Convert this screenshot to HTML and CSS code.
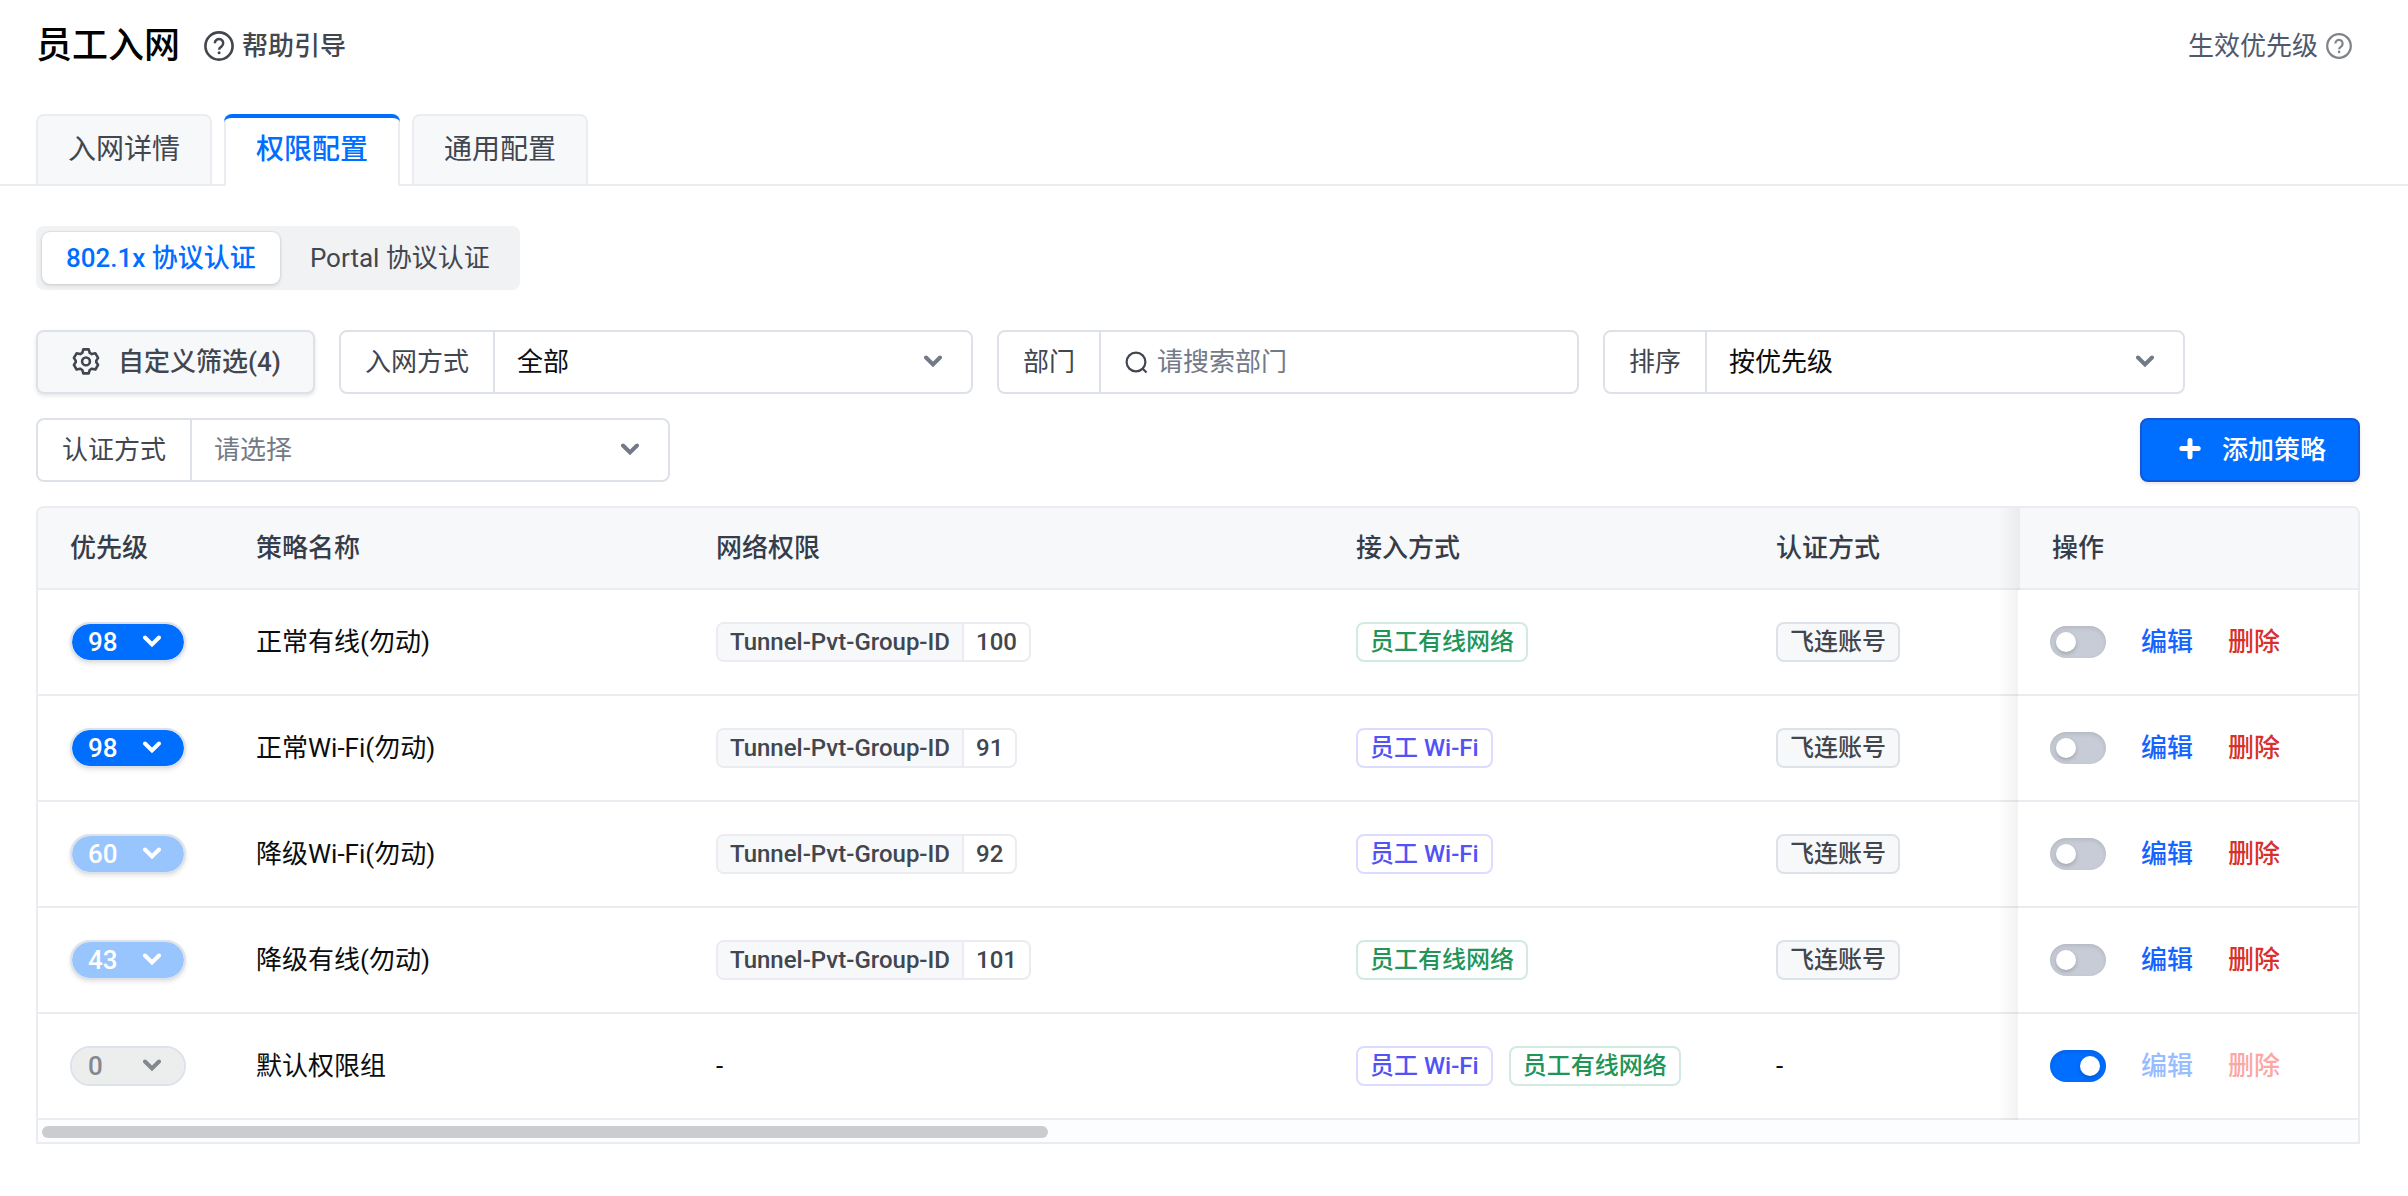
FILE: index.html
```html
<!DOCTYPE html>
<html lang="zh-CN">
<head>
    <meta charset="UTF-8">
    <meta name="viewport" content="width=device-width, initial-scale=1.0">
    <title>员工入网</title>
    <link rel="stylesheet" href="styles.css">
</head>
<body>
    <!-- shared icons -->
    <svg class="sprite" aria-hidden="true">
        <symbol id="icon-help" viewBox="0 0 30 30">
            <circle cx="15" cy="15" r="13.6" fill="none" stroke="currentColor" stroke-width="2.6"/>
            <path d="M10.8 12.2a4.2 4.2 0 1 1 6.6 3.4c-1.5 1-2.3 1.6-2.3 3.1" fill="none" stroke="currentColor" stroke-width="2.5"/>
            <circle cx="15.1" cy="21.8" r="1.5" fill="currentColor"/>
        </symbol>
        <symbol id="icon-down" viewBox="0 0 18 14">
            <path d="M2 2.5l7 7 7-7" fill="none" stroke="currentColor" stroke-width="4" stroke-linecap="round"/>
        </symbol>
    </svg>

    <header class="page-header">
        <h1>员工入网</h1>
        <a class="help" href="#">
            <svg><use href="#icon-help"/></svg>
            帮助引导
        </a>
        <a class="priority-tip" href="#">
            生效优先级
            <svg><use href="#icon-help"/></svg>
        </a>
    </header>

    <nav class="tabs">
        <button type="button" class="tab">入网详情</button>
        <button type="button" class="tab active">权限配置</button>
        <button type="button" class="tab">通用配置</button>
    </nav>

    <main>
        <div class="segment">
            <button type="button" class="active">802.1x 协议认证</button>
            <button type="button">Portal 协议认证</button>
        </div>

        <div class="filters">
            <button type="button" class="btn">
                <svg viewBox="0 0 32 32" fill="none" stroke="currentColor" stroke-width="2.6" stroke-linejoin="round">
                    <path d="M13.3 3.4h5.4l1 3.4 2.2 1.3 3.5-.8 2.7 4.6-1.8 2.7v1.6l1.8 2.7-2.7 4.6-3.5-.8-2.2 1.3-1 3.4h-5.4l-1-3.4-2.2-1.3-3.5.8-2.7-4.6 1.8-2.7v-1.6l-1.8-2.7 2.7-4.6 3.5.8 2.2-1.3z"/>
                    <circle cx="16" cy="15.4" r="3.9"/>
                </svg>
                自定义筛选(4)
            </button>

            <div class="field">
                <label for="access">入网方式</label>
                <div class="select-box">
                    <select id="access"><option>全部</option></select>
                    <svg><use href="#icon-down"/></svg>
                </div>
            </div>

            <div class="field">
                <label for="dept">部门</label>
                <div class="search-box">
                    <svg viewBox="0 0 24 24" fill="none" stroke="currentColor" stroke-width="2.2">
                        <circle cx="11" cy="12" r="9.4"/>
                        <path d="M17.5 18.5l4 4"/>
                    </svg>
                    <input type="text" id="dept" placeholder="请搜索部门">
                </div>
            </div>

            <div class="field">
                <label for="sort">排序</label>
                <div class="select-box">
                    <select id="sort"><option>按优先级</option></select>
                    <svg><use href="#icon-down"/></svg>
                </div>
            </div>

            <div class="field">
                <label for="auth">认证方式</label>
                <div class="select-box">
                    <select id="auth" class="empty"><option>请选择</option></select>
                    <svg><use href="#icon-down"/></svg>
                </div>
            </div>

            <button type="button" class="btn primary">
                <svg viewBox="0 0 32 32" fill="none" stroke="currentColor" stroke-width="5" stroke-linecap="round">
                    <path d="M16 6.4v16.4M7.8 14.6h16.4"/>
                </svg>
                添加策略
            </button>
        </div>

        <div class="table-wrap">
            <table>
                <colgroup>
                    <col class="col-priority">
                    <col class="col-name">
                    <col class="col-network">
                    <col class="col-access">
                    <col>
                    <col class="col-action">
                </colgroup>
                <thead>
                    <tr>
                        <th>优先级</th>
                        <th>策略名称</th>
                        <th>网络权限</th>
                        <th>接入方式</th>
                        <th>认证方式</th>
                        <th class="fixed">操作</th>
                    </tr>
                </thead>
                <tbody>
                    <tr>
                        <td>
                            <div class="pill">
                                <select aria-label="优先级"><option>98</option></select>
                                <svg><use href="#icon-down"/></svg>
                            </div>
                        </td>
                        <td>正常有线(勿动)</td>
                        <td><div class="pair"><span>Tunnel-Pvt-Group-ID</span><span>100</span></div></td>
                        <td><div class="tags"><span class="tag green">员工有线网络</span></div></td>
                        <td><div class="tags"><span class="tag">飞连账号</span></div></td>
                        <td class="fixed">
                            <div class="actions">
                                <input type="checkbox" class="switch" aria-label="启用">
                                <button type="button" class="link">编辑</button>
                                <button type="button" class="link danger">删除</button>
                            </div>
                        </td>
                    </tr>
                    <tr>
                        <td>
                            <div class="pill">
                                <select aria-label="优先级"><option>98</option></select>
                                <svg><use href="#icon-down"/></svg>
                            </div>
                        </td>
                        <td>正常Wi-Fi(勿动)</td>
                        <td><div class="pair"><span>Tunnel-Pvt-Group-ID</span><span>91</span></div></td>
                        <td><div class="tags"><span class="tag purple">员工 Wi-Fi</span></div></td>
                        <td><div class="tags"><span class="tag">飞连账号</span></div></td>
                        <td class="fixed">
                            <div class="actions">
                                <input type="checkbox" class="switch" aria-label="启用">
                                <button type="button" class="link">编辑</button>
                                <button type="button" class="link danger">删除</button>
                            </div>
                        </td>
                    </tr>
                    <tr>
                        <td>
                            <div class="pill light">
                                <select aria-label="优先级"><option>60</option></select>
                                <svg><use href="#icon-down"/></svg>
                            </div>
                        </td>
                        <td>降级Wi-Fi(勿动)</td>
                        <td><div class="pair"><span>Tunnel-Pvt-Group-ID</span><span>92</span></div></td>
                        <td><div class="tags"><span class="tag purple">员工 Wi-Fi</span></div></td>
                        <td><div class="tags"><span class="tag">飞连账号</span></div></td>
                        <td class="fixed">
                            <div class="actions">
                                <input type="checkbox" class="switch" aria-label="启用">
                                <button type="button" class="link">编辑</button>
                                <button type="button" class="link danger">删除</button>
                            </div>
                        </td>
                    </tr>
                    <tr>
                        <td>
                            <div class="pill light">
                                <select aria-label="优先级"><option>43</option></select>
                                <svg><use href="#icon-down"/></svg>
                            </div>
                        </td>
                        <td>降级有线(勿动)</td>
                        <td><div class="pair"><span>Tunnel-Pvt-Group-ID</span><span>101</span></div></td>
                        <td><div class="tags"><span class="tag green">员工有线网络</span></div></td>
                        <td><div class="tags"><span class="tag">飞连账号</span></div></td>
                        <td class="fixed">
                            <div class="actions">
                                <input type="checkbox" class="switch" aria-label="启用">
                                <button type="button" class="link">编辑</button>
                                <button type="button" class="link danger">删除</button>
                            </div>
                        </td>
                    </tr>
                    <tr>
                        <td>
                            <div class="pill disabled">
                                <select aria-label="优先级" disabled><option>0</option></select>
                                <svg><use href="#icon-down"/></svg>
                            </div>
                        </td>
                        <td>默认权限组</td>
                        <td>-</td>
                        <td>
                            <div class="tags">
                                <span class="tag purple">员工 Wi-Fi</span>
                                <span class="tag green">员工有线网络</span>
                            </div>
                        </td>
                        <td>-</td>
                        <td class="fixed">
                            <div class="actions">
                                <input type="checkbox" class="switch" aria-label="启用" checked>
                                <button type="button" class="link" disabled>编辑</button>
                                <button type="button" class="link danger" disabled>删除</button>
                            </div>
                        </td>
                    </tr>
                </tbody>
            </table>
            <div class="scrollbar"><div class="thumb"></div></div>
        </div>
    </main>
</body>
</html>
```

FILE: styles.css
```css
* {
    box-sizing: border-box;
}
body {
    margin: 0;
    background: #fff;
    color: #0c0d0e;
    font-family: Roboto, "Noto Sans CJK SC", sans-serif;
    font-size: 26px;
    line-height: 40px;
}
button, input, select {
    margin: 0;
    padding: 0;
    border: none;
    background: none;
    color: inherit;
    font: inherit;
    outline: none;
}
button {
    cursor: pointer;
    white-space: nowrap;
}
select {
    appearance: none;
    width: 100%;
    height: 100%;
    opacity: 1;
}
a {
    color: inherit;
    text-decoration: none;
}
svg {
    flex: none;
}
.sprite {
    display: none;
}

/* header */
.page-header {
    display: flex;
    align-items: center;
    height: 114px;
    padding: 0 56px 22px 36px;
}
.page-header h1 {
    margin: 0 24px 0 0;
    font-size: 36px;
    font-weight: 500;
    color: #000;
}
.help {
    display: flex;
    align-items: center;
    gap: 8px;
    color: #41464f;
    font-weight: 500;
}
.help svg {
    width: 30px;
    height: 30px;
}
.priority-tip {
    display: flex;
    align-items: center;
    gap: 8px;
    margin-left: auto;
    color: #50596c;
}
.priority-tip svg {
    width: 26px;
    height: 26px;
    color: #80838a;
}

/* tabs */
.tabs {
    display: flex;
    gap: 12px;
    height: 72px;
    padding: 0 36px;
    border-bottom: 2px solid #ebecf1;
}
.tab {
    height: 70px;
    padding: 0 30px;
    border: 2px solid #ebecf1;
    border-bottom: none;
    border-radius: 8px 8px 0 0;
    background: #f7f8fa;
    color: #41464f;
    font-size: 28px;
}
.tab.active {
    position: relative;
    height: 72px;
    padding-bottom: 2px;
    background: #fff;
    color: #006eff;
    font-weight: 500;
}
.tab.active::before {
    content: "";
    position: absolute;
    top: -2px;
    left: -2px;
    right: -2px;
    height: 10px;
    border-top: 4px solid #006eff;
    border-radius: 8px 8px 0 0;
}

main {
    padding: 40px 48px 40px 36px;
}

/* segmented control */
.segment {
    display: inline-flex;
    gap: 6px;
    height: 64px;
    padding: 6px;
    border-radius: 8px;
    background: #f1f2f4;
    vertical-align: top;
}
.segment button {
    padding: 0 24px;
    border-radius: 8px;
    color: #41464f;
}
.segment .active {
    background: #fff;
    box-shadow: 0 0 2px rgba(0, 0, 0, 0.2), 0 2px 4px rgba(0, 0, 0, 0.1);
    color: #006eff;
    font-weight: 500;
}

/* filters */
.filters {
    display: flex;
    flex-wrap: wrap;
    gap: 24px;
    margin: 40px 0 24px;
}
.btn {
    display: flex;
    align-items: center;
    gap: 16px;
    height: 64px;
    padding: 0 32px;
    border: 2px solid #dde2e9;
    border-radius: 8px;
    background: #f7f8fa;
    box-shadow: 0 2px 4px rgba(0, 0, 0, 0.1);
    color: #41464f;
    font-weight: 500;
}
.btn svg {
    width: 32px;
    height: 32px;
}
.btn.primary {
    margin-left: auto;
    border-color: #1456d8;
    background: #006eff;
    color: #fff;
}
.field {
    display: flex;
    height: 64px;
    border: 2px solid #dde2e9;
    border-radius: 8px;
}
.field label {
    padding: 0 24px;
    color: #41464f;
    line-height: 60px;
}
.select-box, .search-box {
    display: flex;
    align-items: center;
    position: relative;
    width: 478px;
    border-left: 2px solid #dde2e9;
}
.select-box select {
    padding-left: 22px;
}
.select-box .empty {
    color: #737a87;
}
.select-box svg {
    position: absolute;
    right: 29px;
    width: 18px;
    height: 14px;
    color: #737a87;
    pointer-events: none;
}
.search-box {
    gap: 8px;
    padding: 0 24px;
}
.search-box svg {
    width: 24px;
    height: 24px;
    color: #41464f;
}
.search-box input {
    flex: 1;
    min-width: 0;
}
.search-box input::placeholder {
    color: #737a87;
    opacity: 1;
}

/* table */
.table-wrap {
    border: 2px solid #ebecf1;
    border-radius: 8px 8px 0 0;
    overflow: hidden;
}
table {
    width: 100%;
    table-layout: fixed;
    border-collapse: separate;
    border-spacing: 0;
}
.col-priority {
    width: 186px;
}
.col-name {
    width: 460px;
}
.col-network {
    width: 640px;
}
.col-access {
    width: 420px;
}
.col-action {
    width: 340px;
}
th, td {
    height: 106px;
    padding: 0 32px;
    border-bottom: 2px solid #ebecf1;
    text-align: left;
    vertical-align: middle;
}
th {
    height: 82px;
    background: #f7f8fa;
    color: #353d4a;
    font-weight: 500;
}
.fixed {
    position: relative;
}
th.fixed {
    padding-left: 34px;
}
.fixed::before {
    content: "";
    position: absolute;
    top: 0;
    bottom: -2px;
    left: -20px;
    width: 20px;
    background: linear-gradient(to right, rgba(0, 0, 0, 0), rgba(0, 0, 0, 0.05));
}
th.fixed::before {
    width: 22px;
}
.pill {
    display: flex;
    align-items: center;
    position: relative;
    width: 116px;
    height: 40px;
    border: 2px solid #dde2e9;
    border-radius: 20px;
    background: #006eff;
    background-clip: padding-box;
    box-shadow: 0 2px 4px rgba(0, 0, 0, 0.1);
    color: #fff;
    font-weight: 500;
}
.pill select {
    padding-left: 16px;
    line-height: 36px;
}
.pill svg {
    position: absolute;
    right: 23px;
    width: 18px;
    height: 14px;
    pointer-events: none;
}
.pill.light {
    background-color: #99c5ff;
}
.pill.disabled {
    background-color: #eceeee;
    box-shadow: none;
    color: #85878f;
}
.pair {
    display: flex;
    width: fit-content;
    height: 40px;
    border: 2px solid #ebecf1;
    border-radius: 8px;
    color: #41464f;
    font-size: 24px;
    font-weight: 500;
    line-height: 36px;
    overflow: hidden;
}
.pair span {
    padding: 0 12px;
}
.pair span:first-child {
    border-right: 2px solid #ebecf1;
    background: #f7f8fa;
}
.tags {
    display: flex;
    gap: 16px;
}
.tag {
    height: 40px;
    padding: 0 12px;
    border: 2px solid #dde2e9;
    border-radius: 8px;
    background: #f7f8fa;
    color: #41464f;
    font-size: 24px;
    font-weight: 500;
    line-height: 36px;
}
.tag.green {
    border-color: #d3ebdf;
    background: #fff;
    color: #219558;
}
.tag.purple {
    border-color: #dcdcff;
    background: #fff;
    color: #5252f5;
}
.actions {
    display: flex;
    align-items: center;
    gap: 35px;
}
.switch {
    appearance: none;
    width: 56px;
    height: 32px;
    padding: 6px;
    border-radius: 16px;
    background: #c7ccd6;
    box-shadow: inset 0 2px 4px rgba(0, 0, 0, 0.1);
    cursor: pointer;
}
.switch::before {
    content: "";
    display: block;
    width: 20px;
    height: 20px;
    border-radius: 50%;
    background: #fff;
    box-shadow: 0 2px 4px rgba(0, 0, 0, 0.2);
}
.switch:checked {
    background: #006eff;
}
.switch:checked::before {
    margin-left: auto;
}
.link {
    color: #1664ff;
    font-weight: 500;
}
.link.danger {
    color: #d7312a;
}
.link:disabled {
    color: #97bcff;
}
.link.danger:disabled {
    color: #fba7a4;
}
.scrollbar {
    height: 22px;
    padding: 6px 4px;
    background: #fcfdff;
}
.thumb {
    width: 1006px;
    height: 12px;
    border-radius: 6px;
    background: #cbccd0;
}
```
